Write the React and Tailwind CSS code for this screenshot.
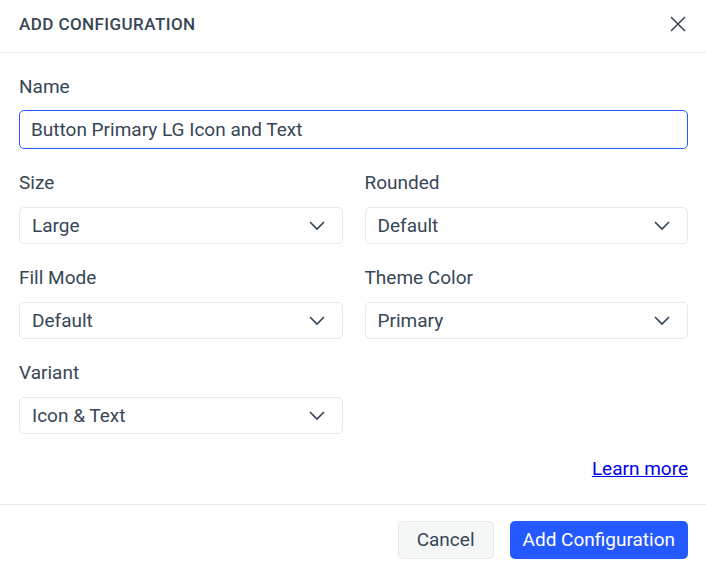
import React, { useState } from "react";

const fields = [
  { id: "size", label: "Size", options: ["Large", "Medium", "Small"] },
  { id: "rounded", label: "Rounded", options: ["Default", "Full", "None"] },
  { id: "fill-mode", label: "Fill Mode", options: ["Default", "Solid", "Outline"] },
  { id: "theme-color", label: "Theme Color", options: ["Primary", "Secondary"] },
  { id: "variant", label: "Variant", options: ["Icon & Text", "Icon", "Text"] },
];

function SelectField({ id, label, options }) {
  return (
    <div>
      <label htmlFor={id} className="block leading-6">
        {label}
      </label>
      <div className="relative mt-3">
        <select
          id={id}
          className="block h-[37px] w-full appearance-none rounded-[5px] border border-[#e8e8e8] bg-white px-3 pt-0.5 outline-none"
        >
          {options.map((option) => (
            <option key={option}>{option}</option>
          ))}
        </select>
        <svg
          viewBox="0 0 16 10"
          className="pointer-events-none absolute top-1/2 right-[18px] h-[10px] w-4 -translate-y-1/2"
          fill="none"
          stroke="currentColor"
          strokeWidth="1.7"
          strokeLinecap="round"
        >
          <path d="M1.5 1.5L8 8l6.500-6.500" />
        </svg>
      </div>
    </div>
  );
}

export default function App() {
  const [name, setName] = useState("Button Primary LG Icon and Text");

  return (
    <form
      className="bg-white font-[Roboto,sans-serif] text-[19px] text-[#374656]"
      onSubmit={(e) => e.preventDefault()}
    >
      {/* Header */}
      <header className="flex h-[53px] items-center justify-between border-b border-[#e8e8e8] px-[19px] pb-1">
        <h1 className="pt-0.5 text-[17px] font-medium tracking-wide">ADD CONFIGURATION</h1>
        <button type="button" aria-label="Close">
          <svg viewBox="0 0 18 18" className="h-[18px] w-[18px]" fill="none" stroke="currentColor" strokeWidth="1.5">
            <path d="M2 2l14 14M16 2L2 16" />
          </svg>
        </button>
      </header>

      {/* Fields */}
      <main className="pt-[22px] pr-[18px] pb-[21px] pl-[19px]">
        <label htmlFor="name" className="block leading-6">
          Name
        </label>
        <input
          id="name"
          value={name}
          onChange={(e) => setName(e.target.value)}
          className="mt-[11px] block h-[39px] w-full rounded-[5px] border border-[#2459ff] px-[11px] outline-none"
        />
        <div className="mt-[22px] grid grid-cols-2 gap-[22px]">
          {fields.map((field) => (
            <SelectField key={field.id} {...field} />
          ))}
        </div>
        <div className="mt-[21px] text-right leading-7">
          <a href="#learn-more" className="text-[#0000ee] underline">
            Learn more
          </a>
        </div>
      </main>

      {/* Actions */}
      <footer className="flex justify-end gap-4 border-t border-[#e8e8e8] py-4 pr-[18px] pl-[19px]">
        <button type="button" className="h-[38px] rounded-[5px] border border-[#e5e8e9] bg-[#f5f7f7] px-[18px]">
          Cancel
        </button>
        <button type="submit" className="h-[38px] rounded-[5px] bg-[#2459ff] px-[13px] text-white">
          Add Configuration
        </button>
      </footer>
    </form>
  );
}
